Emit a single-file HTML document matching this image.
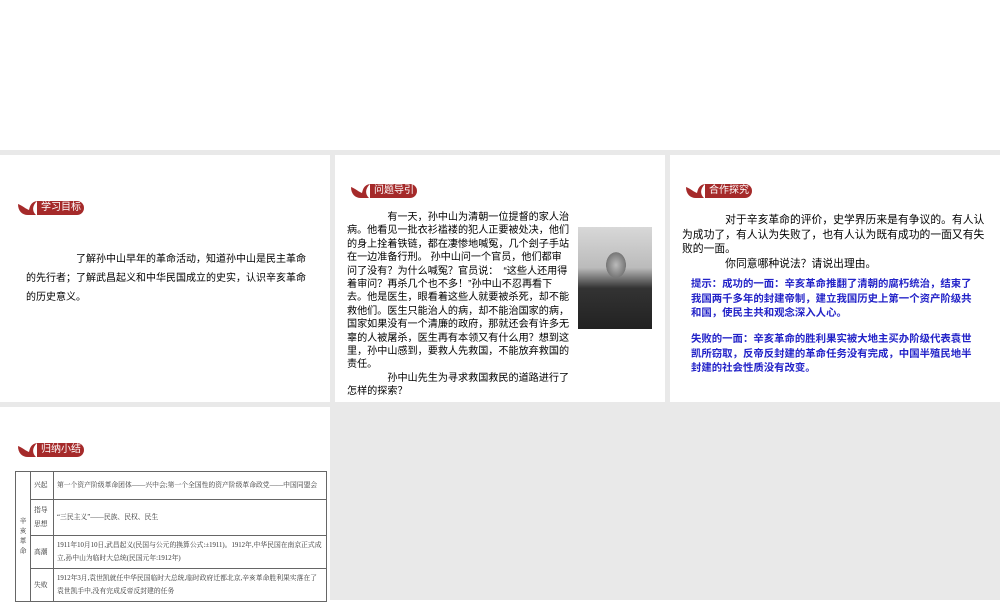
<!DOCTYPE html>
<html><head><meta charset="utf-8"><style>
body{margin:0;width:1000px;height:600px;background:#fff;position:relative;overflow:hidden;font-family:"Liberation Sans","Noto Sans CJK SC",sans-serif;}
.g{position:absolute;background:#e9e9e9}
.b{position:absolute;height:14px;width:66px}
.b span{position:absolute;left:19px;top:0;height:14px;width:47px;background:#a52a2a;border-radius:0 7px 7px 0;color:#fff;font-size:10px;line-height:14px;padding-left:4px;box-sizing:border-box}
.t{position:absolute;color:#000;}
.bl{color:#2323c8;font-weight:bold}
table{position:absolute;left:15px;top:471px;border-collapse:collapse;table-layout:fixed;font-family:"Liberation Serif","Noto Serif CJK SC",serif;font-size:6.8px;color:#333}
td{border:1px solid #666;padding:0 3px;line-height:13px;overflow:hidden}
</style></head><body>
<div class="g" style="left:0;top:150px;width:1000px;height:5px"></div>
<div class="g" style="left:330px;top:155px;width:5px;height:252px"></div>
<div class="g" style="left:665px;top:155px;width:5px;height:252px"></div>
<div class="g" style="left:0;top:402px;width:1000px;height:5px"></div>
<div class="g" style="left:330px;top:407px;width:670px;height:193px"></div>

<svg width="0" height="0" style="position:absolute"><defs><symbol id="h" viewBox="0 0 22 14"><path d="M0 3C0 10 4 14 10 14L18 14C14 10 14 5 19 0C13 1 12 5 11 9C8 8 5 5 0 3Z" fill="#a52a2a"/></symbol></defs></svg>

<div class="b" style="left:18px;top:201px"><svg width="22" height="14" style="position:absolute;left:0;top:0"><use href="#h"/></svg><span>学习目标</span></div>
<div class="t" style="left:26px;top:250px;width:286px;font-size:10px;line-height:19px">　　　　　了解孙中山早年的革命活动，知道孙中山是民主革命的先行者；了解武昌起义和中华民国成立的史实，认识辛亥革命的历史意义。</div>

<div class="b" style="left:351px;top:184px"><svg width="22" height="14" style="position:absolute;left:0;top:0"><use href="#h"/></svg><span>问题导引</span></div>
<div class="t" style="left:347px;top:211px;width:224px;font-size:10.1px;line-height:13.4px">　　　　有一天，孙中山为清朝一位提督的家人治病。他看见一批衣衫褴褛的犯人正要被处决，他们的身上拴着铁链，都在凄惨地喊冤，几个刽子手站在一边准备行刑。 孙中山问一个官员，他们都审问了没有？为什么喊冤？官员说：　“这些人还用得着审问？再杀几个也不多！”孙中山不忍再看下去。他是医生，眼看着这些人就要被杀死，却不能救他们。医生只能治人的病，却不能治国家的病，国家如果没有一个清廉的政府，那就还会有许多无辜的人被屠杀，医生再有本领又有什么用？想到这里，孙中山感到，要救人先救国，不能放弃救国的责任。<br>　　　　孙中山先生为寻求救国救民的道路进行了怎样的探索？</div>
<div style="position:absolute;left:578px;top:227px;width:74px;height:102px;background:radial-gradient(ellipse 14px 18px at 38px 38px,#bbb,#777 70%,transparent 72%),linear-gradient(#d8d8d8,#bbb 40%,#333 60%,#222)"></div>

<div class="b" style="left:686px;top:184px"><svg width="22" height="14" style="position:absolute;left:0;top:0"><use href="#h"/></svg><span>合作探究</span></div>
<div class="t" style="left:682px;top:213px;width:306px;font-size:10.8px;line-height:14.5px">　　　　对于辛亥革命的评价，史学界历来是有争议的。有人认为成功了，有人认为失败了，也有人认为既有成功的一面又有失败的一面。<br>　　　　你同意哪种说法？请说出理由。</div>
<div class="t bl" style="left:691px;top:278px;width:290px;font-size:10.4px;line-height:14.5px">提示：成功的一面：辛亥革命推翻了清朝的腐朽统治，结束了我国两千多年的封建帝制，建立我国历史上第一个资产阶级共和国，使民主共和观念深入人心。</div>
<div class="t bl" style="left:691px;top:333px;width:290px;font-size:10.4px;line-height:14.5px">失败的一面：辛亥革命的胜利果实被大地主买办阶级代表袁世凯所窃取，反帝反封建的革命任务没有完成，中国半殖民地半封建的社会性质没有改变。</div>

<div class="b" style="left:18px;top:443px"><svg width="22" height="14" style="position:absolute;left:0;top:0"><use href="#h"/></svg><span>归纳小结</span></div>
<table style="width:311px">
<colgroup><col style="width:15px"><col style="width:23px"><col style="width:273px"></colgroup>
<tr style="height:28px"><td rowspan="4" style="text-align:center;line-height:10px;padding:0">辛<br>亥<br>革<br>命</td><td>兴起</td><td style="white-space:nowrap">第一个资产阶级革命团体——兴中会;第一个全国性的资产阶级革命政党——中国同盟会</td></tr>
<tr style="height:36px"><td style="line-height:14px">指导思想</td><td>“三民主义”——民族、民权、民生</td></tr>
<tr style="height:33px"><td>高潮</td><td>1911年10月10日,武昌起义(民国与公元的换算公式:±1911)。1912年,中华民国在南京正式成立,孙中山为临时大总统(民国元年:1912年)</td></tr>
<tr style="height:33px"><td>失败</td><td>1912年3月,袁世凯就任中华民国临时大总统,临时政府迁都北京,辛亥革命胜利果实落在了袁世凯手中,没有完成反帝反封建的任务</td></tr>
</table>
</body></html>
